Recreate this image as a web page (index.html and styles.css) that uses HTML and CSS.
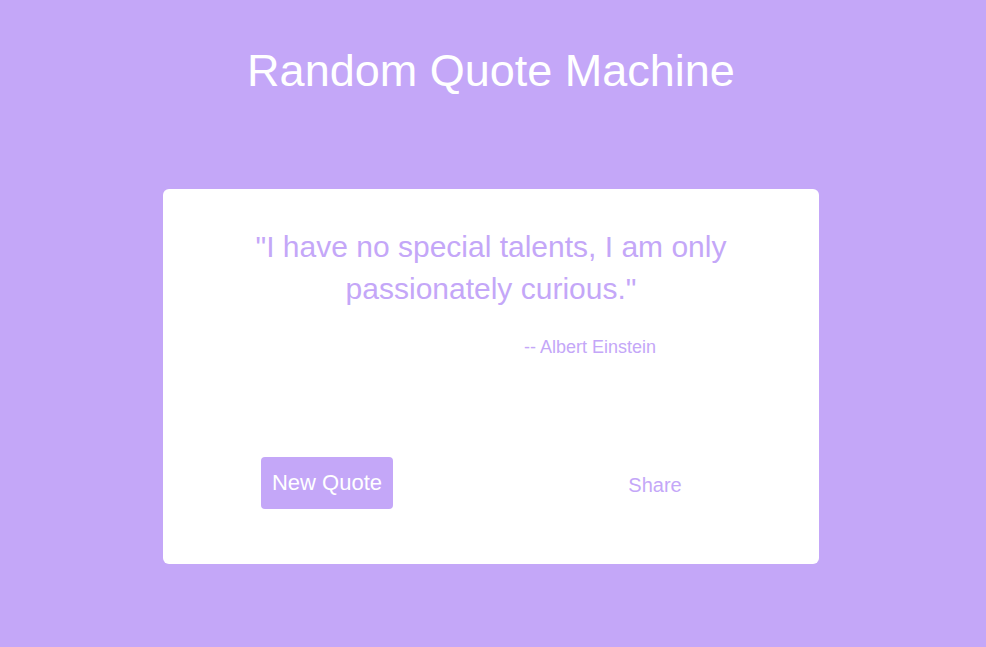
FILE: index.html
```html
<!DOCTYPE html>
<html lang="en">
<head>
<meta charset="utf-8">
<title>Random Quote Machine</title>
<link rel="stylesheet" href="styles.css">
</head>
<body>
<div class="page">
  <h1 class="title">Random Quote Machine</h1>
  <div class="card" id="quote-box">
    <p class="quote" id="text">"I have no special talents, I am only passionately curious."</p>
    <p class="author" id="author">-- Albert Einstein</p>
    <div class="actions">
      <div class="cell"><button class="btn" id="new-quote">New Quote</button></div>
      <div class="cell"><a class="share" id="tweet-quote">Share</a></div>
    </div>
  </div>
</div>
</body>
</html>
```
FILE: styles.css
```css
html, body {
  margin: 0;
  padding: 0;
  background: #c4a7f8;
  font-family: "Liberation Sans", Arial, sans-serif;
}
.page {
  width: 982px;
  padding-top: 45px;
}
.title {
  margin: 0;
  font-size: 45px;
  font-weight: normal;
  color: #ffffff;
  text-align: center;
}
.card {
  width: 656px;
  margin: 92px auto 0;
  background: #ffffff;
  border-radius: 6px;
  padding: 37px 0 55px;
  box-sizing: border-box;
  color: #c4a7f8;
}
.quote {
  margin: 0;
  padding: 0 80px;
  font-size: 30px;
  line-height: 42px;
  text-align: center;
}
.author {
  margin: 27px 0 0;
  padding-right: 163px;
  font-size: 18px;
  text-align: right;
}
.actions {
  display: flex;
  align-items: center;
  margin-top: 99px;
}
.cell {
  flex: 1;
  display: flex;
  justify-content: center;
}
.btn {
  font-family: "Liberation Sans", Arial, sans-serif;
  font-size: 22px;
  line-height: 26px;
  padding: 13px 11px;
  color: #ffffff;
  background: #c4a7f8;
  border: none;
  border-radius: 4px;
}
.share {
  font-size: 20px;
  color: #c4a7f8;
  margin-top: 5px;
}
```
